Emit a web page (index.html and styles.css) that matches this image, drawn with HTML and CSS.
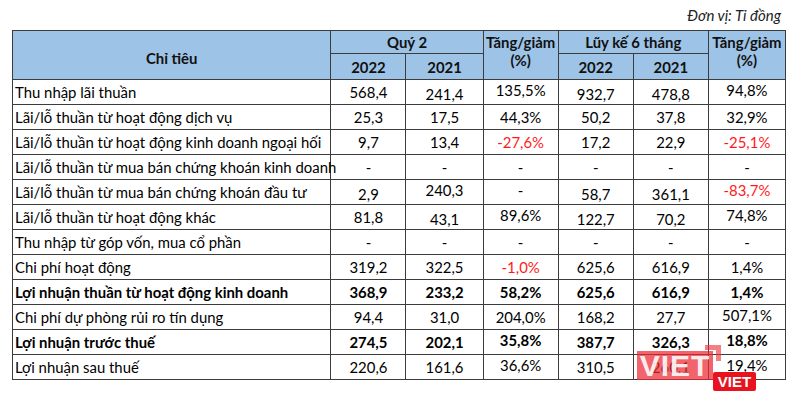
FILE: index.html
```html
<!DOCTYPE html>
<html lang="vi">
<head>
<meta charset="utf-8">
<link rel="stylesheet" href="styles.css">
</head>
<body>
<div class="page">
  <div class="unit">Đơn vị: Tỉ đồng</div>
  <table class="fin">
    <colgroup>
      <col class="c-name"><col class="c-num"><col class="c-num2"><col class="c-num"><col class="c-num"><col class="c-num"><col class="c-num2">
    </colgroup>
    <thead>
      <tr class="h1">
        <th rowspan="2" class="name">Chỉ tiêu</th>
        <th colspan="2">Quý 2</th>
        <th rowspan="2" class="chg">Tăng/giảm<br>(%)</th>
        <th colspan="2">Lũy kế 6 tháng</th>
        <th rowspan="2" class="chg">Tăng/giảm<br>(%)</th>
      </tr>
      <tr class="h2">
        <th>2022</th><th>2021</th><th>2022</th><th>2021</th>
      </tr>
    </thead>
    <tbody>
      <tr><td>Thu nhập lãi thuần</td><td>568,4</td><td class="lo">241,4</td><td class="hi">135,5%</td><td class="lo">932,7</td><td class="lo">478,8</td><td class="hi">94,8%</td></tr>
      <tr><td>Lãi/lỗ thuần từ hoạt động dịch vụ</td><td>25,3</td><td>17,5</td><td>44,3%</td><td>50,2</td><td>37,8</td><td>32,9%</td></tr>
      <tr><td>Lãi/lỗ thuần từ hoạt động kinh doanh ngoại hối</td><td>9,7</td><td>13,4</td><td class="neg">-27,6%</td><td>17,2</td><td>22,9</td><td class="neg">-25,1%</td></tr>
      <tr><td>Lãi/lỗ thuần từ mua bán chứng khoán kinh doanh</td><td>-</td><td>-</td><td>-</td><td>-</td><td>-</td><td>-</td></tr>
      <tr><td>Lãi/lỗ thuần từ mua bán chứng khoán đầu tư</td><td class="lo">2,9</td><td class="hi">240,3</td><td class="hi">-</td><td class="lo">58,7</td><td class="lo">361,1</td><td class="hi neg">-83,7%</td></tr>
      <tr><td>Lãi/lỗ thuần từ hoạt động khác</td><td>81,8</td><td class="lo">43,1</td><td class="hi">89,6%</td><td class="lo">122,7</td><td class="lo">70,2</td><td class="hi">74,8%</td></tr>
      <tr><td>Thu nhập từ góp vốn, mua cổ phần</td><td>-</td><td>-</td><td>-</td><td>-</td><td>-</td><td>-</td></tr>
      <tr><td>Chi phí hoạt động</td><td>319,2</td><td>322,5</td><td class="neg">-1,0%</td><td>625,6</td><td>616,9</td><td>1,4%</td></tr>
      <tr class="bold"><td>Lợi nhuận thuần từ hoạt động kinh doanh</td><td>368,9</td><td>233,2</td><td>58,2%</td><td>625,6</td><td>616,9</td><td>1,4%</td></tr>
      <tr><td>Chi phí dự phòng rủi ro tín dụng</td><td>94,4</td><td>31,0</td><td>204,0%</td><td>168,2</td><td>27,7</td><td class="hi">507,1%</td></tr>
      <tr class="bold"><td>Lợi nhuận trước thuế</td><td>274,5</td><td>202,1</td><td class="hi">35,8%</td><td>387,7</td><td>326,3</td><td class="hi">18,8%</td></tr>
      <tr><td>Lợi nhuận sau thuế</td><td>220,6</td><td>161,6</td><td class="hi">36,6%</td><td>310,5</td><td>260,1</td><td class="hi">19,4%</td></tr>
    </tbody>
  </table>
  <div class="logo">
    <div class="logo-big"><span>VIET</span></div>
    <div class="logo-corner"></div>
    <div class="logo-small"><span>VIET</span></div>
  </div>
</div>
</body>
</html>
```

FILE: styles.css
```css
* { box-sizing: border-box; }
html, body { margin: 0; padding: 0; background: #ffffff; }
body {
  font-family: Lato, "Noto Sans", "Liberation Sans", sans-serif;
  color: #000000;
  width: 810px;
  height: 401px;
  overflow: hidden;
}
.page {
  position: relative;
  padding: 0 24px 0 12px;
}
.unit {
  height: 30px;
  padding: 6px 5px 0 0;
  text-align: right;
  font-style: italic;
  font-size: 15px;
  line-height: 18px;
  color: #222;
}
.fin {
  width: 774px;
  border-collapse: collapse;
  table-layout: fixed;
  font-size: 14.9px;
}
.c-name { width: 318px; }
.c-num { width: 75px; }
.c-num2 { width: 77px; }
.fin th, .fin td {
  border: 1px solid #3c3c3c;
  padding: 0;
  text-align: center;
  vertical-align: middle;
  line-height: 18px;
}
.fin thead th {
  background: #9dc3e6;
  font-weight: 700;
  color: #111;
}
.fin .h1 th { height: 23px; }
.fin .h2 th { height: 26px; }
.fin th.name { padding-top: 5px; }
.fin th.chg { vertical-align: top; padding-top: 2px; }
.fin tbody td { height: 25px; }
.fin tbody td:first-child {
  text-align: left;
  padding-left: 2px;
  white-space: nowrap;
}
.fin td.lo { padding-top: 4px; }
.fin td.hi { padding-bottom: 4px; }
.fin tr.bold td { font-weight: 700; }
.fin td.neg { color: #ff1a1a; }

.logo {
  position: absolute;
  left: 637px;
  top: 345px;
  width: 120px;
  height: 48px;
}
.logo-big {
  position: absolute;
  left: 0;
  top: 6px;
  width: 76px;
  height: 29px;
  background: rgba(236, 40, 50, 0.72);
  display: flex;
  align-items: center;
  justify-content: center;
}
.logo-big span {
  color: rgba(255, 255, 255, 0.9);
  font-family: "Liberation Sans", Arial, sans-serif;
  font-weight: 700;
  font-size: 30px;
  letter-spacing: 1px;
  line-height: 1;
}
.logo-corner {
  position: absolute;
  left: 68px;
  top: 0;
  width: 16px;
  height: 16px;
  border-top: 5px solid rgba(236, 40, 50, 0.6);
  border-right: 5px solid rgba(236, 40, 50, 0.6);
}
.logo-small {
  position: absolute;
  left: 76px;
  top: 27px;
  width: 43px;
  height: 19px;
  background: #e8131f;
  border-radius: 2px;
  display: flex;
  align-items: center;
  justify-content: center;
}
.logo-small span {
  color: #ffffff;
  font-family: "Liberation Sans", Arial, sans-serif;
  font-weight: 700;
  font-size: 15px;
  line-height: 1;
}
```
